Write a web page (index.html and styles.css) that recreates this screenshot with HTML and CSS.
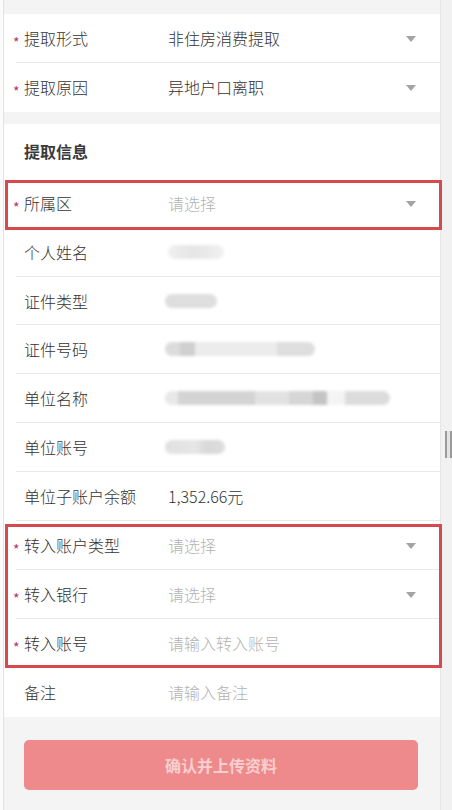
FILE: index.html
```html
<!DOCTYPE html>
<html lang="zh-CN">
<head>
<meta charset="utf-8">
<title>提取信息</title>
<link rel="stylesheet" href="styles.css">
</head>
<body>
<div class="page">
  <div class="edge"></div>
  <div class="main">
    <div class="group">
      <div class="row">
        <div class="label"><span class="req">*</span>提取形式</div>
        <div class="value">非住房消费提取</div>
        <svg class="arrow" width="10" height="6" viewBox="0 0 10 6"><polygon points="0,0 10,0 5,6" fill="#a3a3a3"/></svg>
      </div>
      <div class="row last">
        <div class="label"><span class="req">*</span>提取原因</div>
        <div class="value">异地户口离职</div>
        <svg class="arrow" width="10" height="6" viewBox="0 0 10 6"><polygon points="0,0 10,0 5,6" fill="#a3a3a3"/></svg>
      </div>
    </div>

    <div class="group second">
      <div class="header">提取信息</div>

      <div class="hl hl-one">
        <div class="row">
          <div class="label"><span class="req">*</span>所属区</div>
          <div class="value placeholder">请选择</div>
          <svg class="arrow" width="10" height="6" viewBox="0 0 10 6"><polygon points="0,0 10,0 5,6" fill="#a3a3a3"/></svg>
        </div>
      </div>

      <div class="row">
        <div class="label">个人姓名</div>
        <div class="value"><span class="blur b-name"></span></div>
      </div>
      <div class="row">
        <div class="label">证件类型</div>
        <div class="value"><span class="blur b-type"></span></div>
      </div>
      <div class="row">
        <div class="label">证件号码</div>
        <div class="value"><span class="blur b-id"></span></div>
      </div>
      <div class="row">
        <div class="label">单位名称</div>
        <div class="value"><span class="blur b-org"></span></div>
      </div>
      <div class="row">
        <div class="label">单位账号</div>
        <div class="value"><span class="blur b-acc"></span></div>
      </div>
      <div class="row">
        <div class="label">单位子账户余额</div>
        <div class="value">1,352.66元</div>
      </div>

      <div class="hl hl-three">
        <div class="row">
          <div class="label"><span class="req">*</span>转入账户类型</div>
          <div class="value placeholder">请选择</div>
          <svg class="arrow" width="10" height="6" viewBox="0 0 10 6"><polygon points="0,0 10,0 5,6" fill="#a3a3a3"/></svg>
        </div>
        <div class="row">
          <div class="label"><span class="req">*</span>转入银行</div>
          <div class="value placeholder">请选择</div>
          <svg class="arrow" width="10" height="6" viewBox="0 0 10 6"><polygon points="0,0 10,0 5,6" fill="#a3a3a3"/></svg>
        </div>
        <div class="row">
          <div class="label"><span class="req">*</span>转入账号</div>
          <div class="value placeholder">请输入转入账号</div>
        </div>
      </div>

      <div class="row last">
        <div class="label">备注</div>
        <div class="value placeholder">请输入备注</div>
      </div>
    </div>

    <div class="btn">确认并上传资料</div>
  </div>
  <div class="scroll"><div class="thumb"></div></div>
</div>
</body>
</html>
```

FILE: styles.css
```css
html, body {
  margin: 0;
  padding: 0;
  background: #fbfbfb;
  font-family: "Noto Sans CJK SC", "Noto Sans", sans-serif;
  color: #333;
}

.page {
  display: flex;
  width: 452px;
  height: 810px;
  overflow: hidden;
}

.edge {
  width: 3px;
  flex: none;
  background: #fbfbfb;
}

.main {
  width: 438px;
  flex: none;
  box-sizing: border-box;
  border-left: 1px solid #e2e2e2;
  border-right: 1px solid #e6e6e6;
  background: #f4f4f5;
  padding-top: 14px;
}

.group {
  background: #fff;
}

.group.second {
  margin-top: 12px;
}

.header {
  height: 55px;
  display: flex;
  align-items: center;
  padding-left: 20px;
  font-size: 16px;
  font-weight: 700;
  color: #3a3a3a;
}

.row {
  height: 48.9px;
  box-sizing: border-box;
  margin-left: 12px;
  border-bottom: 1px solid #e8e8e8;
  display: flex;
  align-items: center;
  font-size: 16px;
  font-weight: 300;
}

.row.last {
  border-bottom: none;
}

.label {
  width: 152px;
  flex: none;
  box-sizing: border-box;
  padding-left: 8px;
  color: #333;
  white-space: nowrap;
}

.req {
  display: inline-block;
  width: 11px;
  margin-left: -11px;
  font-size: 14px;
  font-weight: 400;
  color: #b3365c;
  vertical-align: -3px;
  line-height: 1;
}

.value {
  flex: 1;
  color: #333;
  white-space: nowrap;
  display: flex;
  align-items: center;
}

.value.placeholder {
  color: #b3b3b3;
}

.arrow {
  flex: none;
  margin-right: 24px;
  margin-top: 2px;
}

.hl {
  position: relative;
}

.hl::after {
  content: "";
  position: absolute;
  left: 1px;
  right: -2px;
  border: 3px solid #d54a4d;
  pointer-events: none;
}

.hl-one::after {
  top: 1px;
  bottom: -2px;
}

.hl-three::after {
  top: 3px;
  bottom: 0;
}

.blur {
  display: inline-block;
  height: 14px;
  border-radius: 7px;
  filter: blur(1.5px);
}

.b-name {
  width: 56px;
  background: linear-gradient(90deg, #f0f0f0 0%, #e6e6e6 40%, #e9e9e9 70%, #f2f2f2 100%);
}

.b-type {
  width: 52px;
  margin-left: -3px;
  background: #dedede;
}

.b-id {
  width: 150px;
  margin-left: -3px;
  background: linear-gradient(90deg, #dcdcdc 0%, #dcdcdc 10%, #cfcfcf 10%, #cfcfcf 20%, #ececec 20%, #ececec 75%, #dedede 75%, #dedede 100%);
}

.b-org {
  width: 225px;
  margin-left: -3px;
  background: linear-gradient(90deg, #e8e8e8 0%, #e8e8e8 6%, #d4d4d4 6%, #d4d4d4 40%, #e2e2e2 40%, #e2e2e2 55%, #d6d6d6 55%, #d6d6d6 66%, #c4c4c4 66%, #c4c4c4 72%, #f4f4f4 72%, #f4f4f4 80%, #dcdcdc 80%, #dcdcdc 100%);
}

.b-acc {
  width: 60px;
  margin-left: -3px;
  background: linear-gradient(90deg, #e0e0e0 0%, #e6e6e6 50%, #d8d8d8 70%, #dedede 100%);
}

.btn {
  margin: 23px 22px 0 20px;
  height: 50px;
  border-radius: 5px;
  background: #ee8a8b;
  color: #f8cfcf;
  font-size: 16px;
  font-weight: 700;
  display: flex;
  align-items: center;
  justify-content: center;
}

.scroll {
  flex: 1;
  background: #f1f1f1;
  padding-top: 431px;
}

.thumb {
  margin-left: 4px;
  width: 3px;
  height: 27px;
  background: #e4e4e4;
  border-left: 2px solid #9a9a9a;
  border-right: 2px solid #9a9a9a;
}
```
